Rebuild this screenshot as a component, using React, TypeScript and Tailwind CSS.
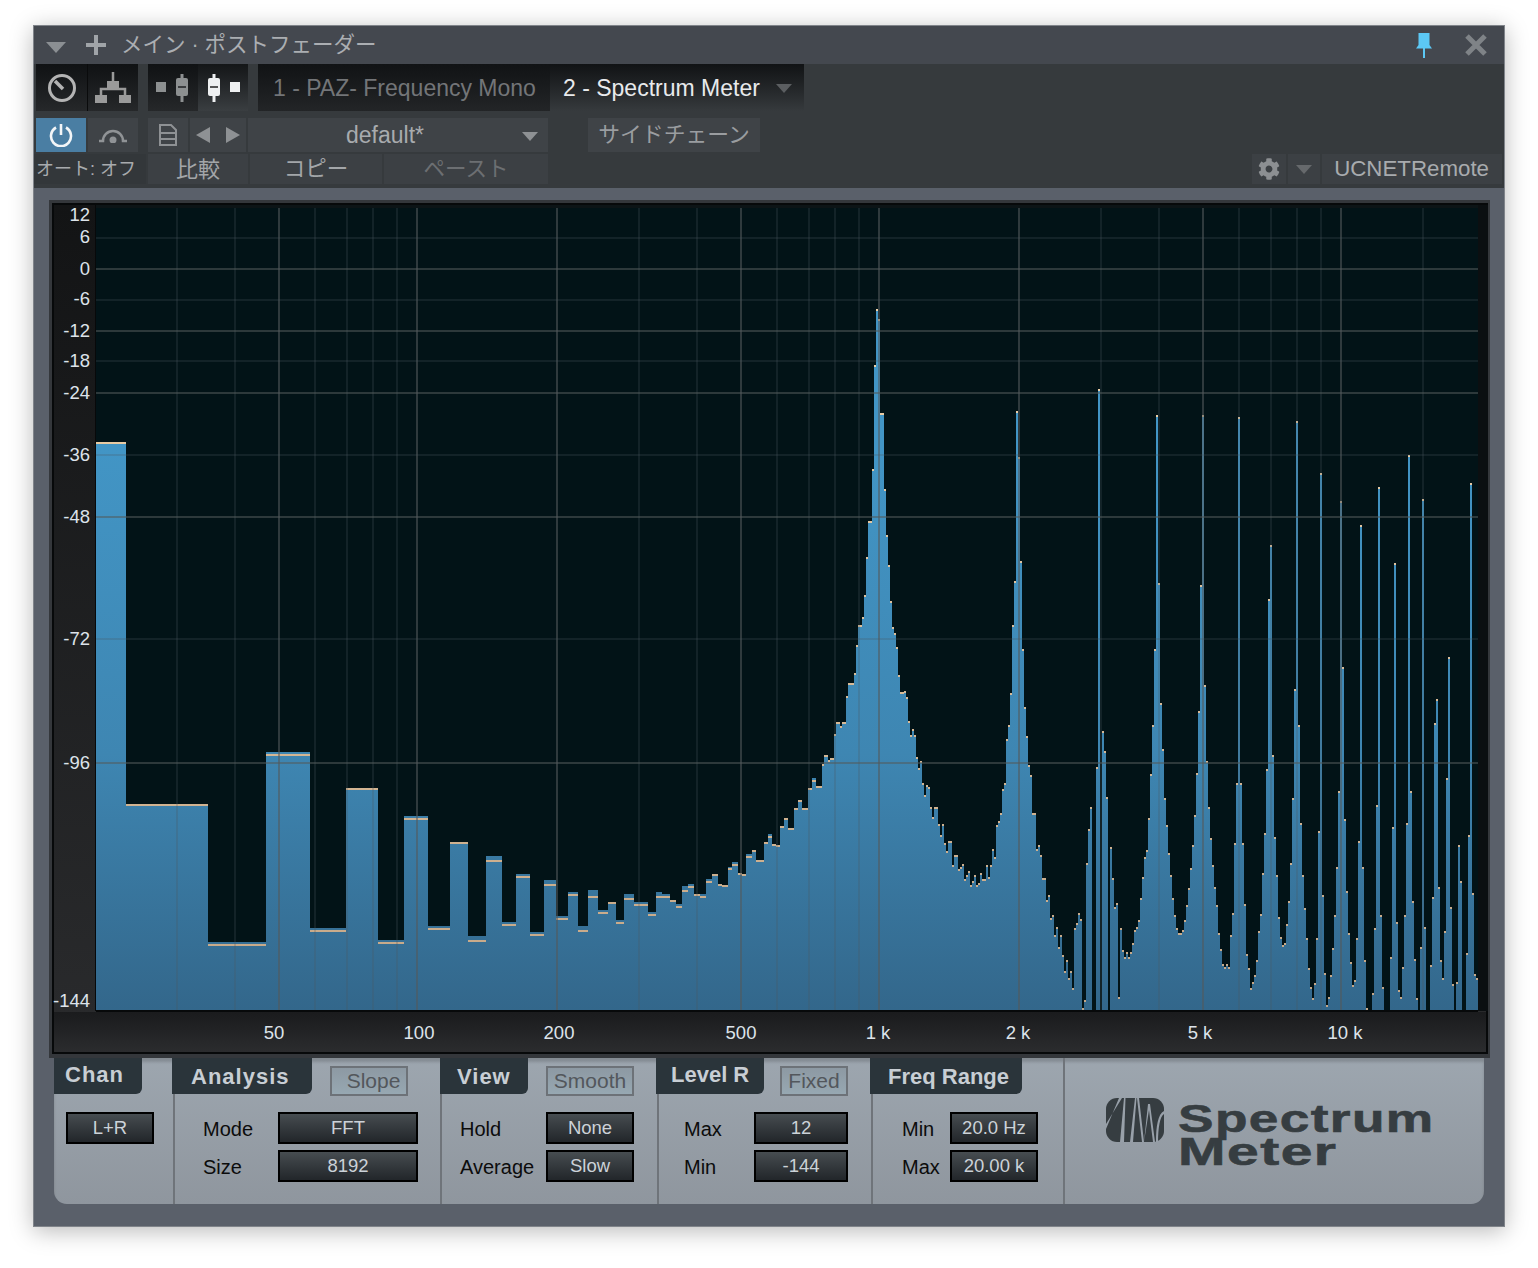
import React from 'react';
import { FaCog } from 'react-icons/fa';

const sans = 'font-["Liberation_Sans","Noto_Sans_CJK_JP",sans-serif]';

// x start, bar top, peak-hold marker (defaults to top). a block ends where the next one starts
const blocks: number[][] = [
  [96, 442], [126, 804], [208, 942, 944], [266, 752, 754], [310, 928, 930], [346, 788], [378, 940, 942],
  [404, 816, 818], [428, 926, 928], [450, 842], [468, 936, 940], [486, 856, 860], [502, 922, 924],
  [516, 874, 876], [530, 932, 934], [544, 880, 884], [556, 916, 918], [568, 892, 894], [578, 926, 930],
  [588, 890, 896], [598, 910, 912], [608, 902], [616, 920, 922], [624, 894, 898], [634, 902, 904],
  [648, 912, 914], [656, 892, 896], [662, 894, 896], [670, 900], [676, 904, 906], [682, 886, 890],
  [688, 884, 886], [694, 894], [700, 894, 896], [706, 879, 881], [712, 874], [718, 884], [722, 885],
  [728, 867, 868], [732, 862, 864], [738, 873], [742, 874], [746, 854, 856], [752, 850], [756, 860],
  [764, 842], [768, 834, 836], [772, 844], [776, 845], [780, 826], [784, 818], [788, 828], [794, 808],
  [798, 800], [802, 808], [808, 788], [812, 778, 780], [816, 786], [822, 764], [824, 755], [828, 760],
  [830, 758], [834, 734], [836, 722], [840, 726], [842, 722], [846, 696], [848, 683], [854, 673],
  [856, 645], [858, 625], [862, 617], [864, 595], [866, 557], [868, 521], [872, 469], [874, 365],
  [876, 309], [878, 319], [880, 413], [884, 489], [886, 535], [888, 565], [890, 601], [892, 627],
  [894, 633], [896, 647], [898, 675], [900, 692], [904, 691], [906, 697], [908, 721], [910, 735],
  [912, 729], [914, 735], [916, 757], [918, 768], [920, 761], [922, 783], [924, 795], [926, 785],
  [928, 787], [930, 807], [932, 817], [934, 807], [938, 824], [940, 835], [942, 824], [944, 843],
  [946, 851], [948, 841], [952, 865], [954, 855], [958, 869], [960, 867], [962, 864], [964, 879],
  [966, 875], [968, 871], [970, 885], [972, 881], [974, 875], [976, 885], [978, 883], [980, 873],
  [982, 879], [986, 865], [988, 877], [990, 865], [992, 849], [994, 857], [996, 825], [998, 821],
  [1000, 813], [1002, 789], [1004, 783], [1006, 739], [1008, 725], [1010, 693], [1012, 625], [1014, 581],
  [1016, 411], [1018, 457], [1020, 561], [1022, 649], [1024, 707], [1026, 736], [1028, 765], [1030, 775],
  [1032, 813], [1036, 849], [1038, 845], [1040, 855], [1042, 878], [1046, 900], [1048, 895], [1050, 918],
  [1052, 915], [1054, 935], [1056, 927], [1058, 947], [1060, 935], [1062, 955], [1064, 971], [1066, 960],
  [1068, 978], [1070, 971], [1072, 988], [1074, 928], [1076, 923], [1078, 913], [1080, 919], [1082, 1008],
  [1084, 1000], [1086, 863], [1088, 829], [1090, 807], [1092, 1010], [1096, 767], [1098, 389], [1100, 1010],
  [1102, 731], [1104, 751], [1106, 797], [1108, 1010], [1110, 847], [1112, 878], [1114, 907], [1116, 903],
  [1118, 997],
];

// from x=1120 the bars are plain 2px columns
const columns = [
  928, 950, 957, 952, 957, 952, 943, 930, 927, 920, 898, 877, 857, 850, 818, 774, 725, 649, 415, 583, 703, 749,
  798, 825, 853, 875, 898, 915, 928, 933, 933, 930, 920, 905, 888, 868, 845, 815, 773, 711, 585, 415, 685, 761,
  807, 838, 865, 887, 905, 933, 949, 964, 967, 964, 967, 935, 913, 843, 783, 417, 783, 843, 904, 954, 968, 988,
  982, 975, 960, 931, 914, 873, 833, 769, 599, 545, 755, 837, 875, 917, 937, 945, 943, 924, 901, 863, 798, 689,
  421, 725, 823, 875, 908, 938, 968, 987, 998, 983, 938, 831, 473, 895, 973, 1005, 997, 975, 948, 915, 867, 791,
  501, 667, 819, 891, 933, 962, 985, 980, 938, 841, 525, 867, 960, 1008, 1010, 1010, 993, 928, 805, 487, 915, 987,
  1010, 1010, 1010, 957, 827, 563, 922, 990, 997, 967, 915, 823, 455, 791, 901, 959, 998, 1010, 947, 499, 927, 1010,
  1010, 965, 897, 723, 699, 887, 960, 978, 931, 778, 657, 907, 984, 1010, 982, 845, 881, 1010, 1010, 953, 835, 483,
  893, 974, 978,
];

const bars = [
  ...blocks.map((b, i) => ({ x0: b[0], x1: i < blocks.length - 1 ? blocks[i + 1][0] : 1120, top: b[1], mark: b[2] ?? b[1] })),
  ...columns.map((top, i) => ({ x0: 1120 + i * 2, x1: 1122 + i * 2, top, mark: top })),
];

const barPath = bars.map((b) => `M${b.x0} 1010V${b.top}H${b.x1}V1010Z`).join('');

const dimV = [177, 235, 315, 347, 373, 397, 639, 697, 777, 809, 835, 859, 1101, 1159, 1239, 1271, 1297, 1321, 1423];
const brightV = [279, 417, 557, 741, 879, 1019, 1203, 1341];
const dimH = [238, 300, 361, 455, 639];
const brightH = [269, 331, 393, 517, 763];

const yLabels: [string, number][] = [
  ['12', 214], ['6', 236], ['0', 268], ['-6', 298], ['-12', 330], ['-18', 360], ['-24', 392],
  ['-36', 454], ['-48', 516], ['-72', 638], ['-96', 762], ['-144', 1000],
];
const xLabels: [string, number][] = [
  ['50', 274], ['100', 419], ['200', 559], ['500', 741], ['1 k', 878], ['2 k', 1018], ['5 k', 1200], ['10 k', 1345],
];

function Spectrum() {
  return (
    <svg width={1441} height={858} viewBox="49 200 1441 858" className="block">
      <defs>
        <linearGradient id="bar" gradientUnits="userSpaceOnUse" x1="0" y1="208" x2="0" y2="1010">
          <stop offset="0.3" stopColor="#4295c5" />
          <stop offset="0.68" stopColor="#3e86b2" />
          <stop offset="1" stopColor="#33678b" />
        </linearGradient>
        <linearGradient id="peak" gradientUnits="userSpaceOnUse" x1="0" y1="208" x2="0" y2="1010">
          <stop offset="0" stopColor="#f7dab0" />
          <stop offset="1" stopColor="#c4a687" />
        </linearGradient>
        <linearGradient id="side" x1="0" y1="0" x2="0" y2="1">
          <stop offset="0" stopColor="#131415" />
          <stop offset="1" stopColor="#2a2b2d" />
        </linearGradient>
        <linearGradient id="strip" x1="0" y1="0" x2="0" y2="1">
          <stop offset="0" stopColor="#1a1b1d" />
          <stop offset="1" stopColor="#2b2c2e" />
        </linearGradient>
      </defs>
      <rect x="49" y="200" width="1441" height="858" fill="#34373b" />
      <rect x="52" y="203" width="1436" height="851" fill="#07090a" />
      <rect x="54" y="205" width="1432" height="847" fill="url(#side)" />
      <rect x="95" y="205" width="1391" height="3" fill="#0c1416" />
      <rect x="95" y="205" width="1" height="806" fill="#07090a" />
      <rect x="1478" y="205" width="10" height="806" fill="#0b0f11" />
      <rect x="96" y="208" width="1382" height="802" fill="#021317" />
      <rect x="54" y="1012" width="1432" height="40" fill="url(#strip)" />
      <rect x="96" y="1010" width="1382" height="2" fill="#07090a" />

      <path d={barPath} fill="url(#bar)" />
      {bars.filter((b) => b.top < 1010).map((b) => (
        <rect key={b.x0} x={b.x0} y={b.mark} width={b.x1 - b.x0} height={2} fill="url(#peak)" />
      ))}

      {dimV.map((x) => <rect key={x} x={x - 0.75} y={208} width={1.5} height={802} fill="#4a5a60" opacity={0.32} />)}
      {brightV.map((x) => <rect key={x} x={x - 0.75} y={208} width={1.5} height={802} fill="#545a5b" opacity={0.75} />)}
      {dimH.map((y) => <rect key={y} x={96} y={y - 0.75} width={1382} height={1.5} fill="#4a5a60" opacity={0.32} />)}
      {brightH.map((y) => <rect key={y} x={96} y={y - 0.75} width={1382} height={1.5} fill="#545a5b" opacity={0.72} />)}

      <g fontFamily="'Liberation Sans', sans-serif" fontSize="18.5" fill="#dde3ea">
        {yLabels.map(([t, y]) => (
          <text key={t} x={90} y={y} textAnchor="end" dominantBaseline="central">{t}</text>
        ))}
        {xLabels.map(([t, x]) => (
          <text key={t} x={x} y={1032} textAnchor="middle" dominantBaseline="central">{t}</text>
        ))}
      </g>
    </svg>
  );
}

function Triangle({ className }: { className: string }) {
  return (
    <svg width="20" height="11" viewBox="0 0 20 11" className={className}>
      <path d="M0 0H20L10 11Z" fill="currentColor" />
    </svg>
  );
}

function Fader({ lit, flip }: { lit?: boolean; flip?: boolean }) {
  const c = lit ? '#eef0f1' : '#8d9091';
  const square = <rect x={flip ? 24 : 0} y="8" width="10" height="10" fill={c} />;
  const capX = flip ? 8 : 26;
  return (
    <svg width="34" height="28" viewBox="0 0 34 28">
      {square}
      <rect x={capX - 1.5} y="0" width="3" height="28" fill={c} />
      <rect x={capX - 6} y="4" width="12" height="18" rx="2" fill={c} />
      <rect x={capX - 4} y="12" width="8" height="2" fill={lit ? '#555' : '#3a3c3e'} />
    </svg>
  );
}

function Toggle({ label, w, ml, pl = '' }: { label: string; w: string; ml: string; pl?: string }) {
  return (
    <div className={`${w} ${ml} ${pl} mt-[8px] h-[30px] border-2 border-[#6d7278] bg-linear-to-b from-[#8d99a3] to-[#97a8b2] flex items-center justify-center text-[21px] text-[#53575c]`}>
      {label}
    </div>
  );
}

function Tab({ label, w, ml, pb, pl, track }: { label: string; w: string; ml: string; pb: string; pl: string; track: string }) {
  return (
    <div className={`${w} ${ml} ${pb} ${pl} ${track} h-[36px] bg-[#2a343a] rounded-br-[6px] flex items-center font-bold text-[22px] text-[#c8ced4] whitespace-nowrap`}>
      {label}
    </div>
  );
}

function Value({ label, w }: { label: string; w: string }) {
  return (
    <div className={`${w} h-[32px] border-2 border-black bg-linear-to-b from-[#474d51] to-[#22262a] flex items-center justify-center pb-[1px] text-[18.5px] text-[#ccd2d8]`}>
      {label}
    </div>
  );
}

function Row({ label, labelW, value, valueW }: { label: string; labelW: string; value: string; valueW: string }) {
  return (
    <div className="flex items-center h-[32px]">
      <div className={`${labelW} text-[20px] text-[#0c0c0c] pt-[2px]`}>{label}</div>
      <Value label={value} w={valueW} />
    </div>
  );
}

const toolBtn = 'h-full bg-[#3f4347] flex items-center justify-center';
const autoBtn = 'h-full bg-[#3c4044] flex items-center justify-center';

export default function App() {
  return (
    <div className={`${sans} w-[1538px] h-[1268px] bg-white pt-[25px] pl-[33px]`}>
      <div className="w-[1472px] border border-[#80848a] shadow-[0_4px_22px_rgba(0,0,0,0.28)]">
        {/* title bar */}
        <div className="h-[38px] bg-[#44484f] flex items-center pl-[12px] pr-[17px] text-[#abaeb2]">
          <Triangle className="text-[#8b8f93] mt-[4px]" />
          <svg width="20" height="20" viewBox="0 0 20 20" className="ml-[20px] text-[#a0a4a8]">
            <path d="M8 0h4v8h8v4h-8v8H8v-8H0V8h8z" fill="currentColor" />
          </svg>
          <span className="ml-[15px] pt-[2px] text-[21.5px] leading-none">メイン · ポストフェーダー</span>
          <svg width="16" height="25" viewBox="0 0 16 25" className="ml-auto">
            <path d="M2.5 0H13.5V12L16 15.5H9V25H7V15.5H0L2.5 12Z" fill="#5cc8f5" />
          </svg>
          <svg width="22" height="22" viewBox="0 0 22 22" className="ml-[33px]">
            <path d="M2 2L20 20M20 2L2 20" stroke="#7f8387" strokeWidth="5" />
          </svg>
        </div>

        {/* toolbar */}
        <div className="h-[124px] bg-[#363a3d] flex flex-col">
          <div className="h-[48px] flex pl-[2px]">
            <div className="w-[51px] h-[47px] bg-linear-to-b from-[#101214] to-[#26282a] flex items-center justify-center">
              <svg width="30" height="30" viewBox="0 0 30 30" fill="none" stroke="#b4b4b4" strokeWidth="3">
                <circle cx="15" cy="15" r="12.5" />
                <path d="M8 8L16 16" strokeWidth="3.5" />
              </svg>
            </div>
            <div className="w-[51px] h-[47px] border-l border-[#0a0b0c] bg-linear-to-b from-[#101214] to-[#26282a] flex items-center justify-center">
              <svg width="38" height="32" viewBox="0 0 38 32">
                <path d="M19 0v13M7 24v-7h24v7" fill="none" stroke="#9a9a9a" strokeWidth="2.5" />
                <rect x="13" y="9" width="12" height="8" fill="#9a9a9a" />
                <rect x="1" y="23" width="12" height="8" fill="#9a9a9a" />
                <rect x="25" y="23" width="12" height="8" fill="#9a9a9a" />
              </svg>
            </div>
            <div className="ml-[10px] w-[50px] h-[47px] bg-linear-to-b from-[#101214] to-[#26282a] flex items-center justify-center">
              <Fader />
            </div>
            <div className="w-[50px] h-[47px] bg-linear-to-b from-[#141618] to-[#3a3e41] flex items-center justify-center">
              <Fader lit flip />
            </div>
            <div className="ml-[10px] w-[292px] h-[47px] pt-[2px] bg-linear-to-b from-[#111315] to-[#232527] flex items-center pl-[15px] text-[23px] text-[#737578]">
              1 - PAZ- Frequency Mono
            </div>
            <div className="w-[254px] h-[47px] pt-[2px] bg-linear-to-b from-[#111315] to-[#363a3d] flex items-center pl-[13px] text-[23px] text-[#e8eaec]">
              2 - Spectrum Meter
              <Triangle className="ml-[16px] w-[16px] text-[#5b5e61]" />
            </div>
          </div>

          <div className="h-[34px] mt-[6px] flex pl-[2px]">
            <div className="w-[50px] h-full bg-[#4a7ea3] flex items-center justify-center">
              <svg width="24" height="24" viewBox="0 0 24 24" fill="none" stroke="#f2f5f7" strokeWidth="2.6">
                <path d="M7 4.5A10 10 0 1 0 17 4.5" />
                <path d="M12 1V12" />
              </svg>
            </div>
            <div className={`w-[50px] ml-[2px] ${toolBtn}`}>
              <svg width="32" height="16" viewBox="0 0 32 16">
                <path d="M2 14h4a10 10 0 0 1 20 0h4" fill="none" stroke="#909396" strokeWidth="2.5" />
                <circle cx="16" cy="13" r="3.5" fill="#909396" />
              </svg>
            </div>
            <div className={`w-[40px] ml-[10px] ${toolBtn}`}>
              <svg width="18" height="22" viewBox="0 0 18 22" fill="none" stroke="#8e9194" strokeWidth="2">
                <path d="M1 1H12L17 6V21H1ZM1 9H17M1 15H17" />
              </svg>
            </div>
            <div className={`w-[56px] ml-[2px] gap-[16px] ${toolBtn}`}>
              <svg width="14" height="16" viewBox="0 0 14 16"><path d="M14 0V16L0 8Z" fill="#8e9194" /></svg>
              <svg width="14" height="16" viewBox="0 0 14 16"><path d="M0 0V16L14 8Z" fill="#8e9194" /></svg>
            </div>
            <div className={`w-[300px] ml-[2px] ${toolBtn} relative text-[23px] text-[#a8abae] pr-[26px]`}>
              default*
              <Triangle className="absolute right-[10px] top-[13px] w-[16px] text-[#8e9194]" />
            </div>
            <div className={`w-[172px] ml-[40px] ${toolBtn} text-[21.8px] text-[#9a9da0]`}>サイドチェーン</div>
          </div>

          <div className="h-[30px] mt-[2px] flex">
            <div className="w-[112px] h-full bg-[#33373a] flex items-center pl-[2px] text-[18px] text-[#a8abae] whitespace-nowrap">オート: オフ</div>
            <div className={`w-[100px] ml-[2px] text-[22px] text-[#a3a6a9] ${autoBtn}`}>比較</div>
            <div className={`w-[132px] ml-[2px] text-[21.5px] text-[#a3a6a9] ${autoBtn}`}>コピー</div>
            <div className={`w-[164px] ml-[2px] text-[21.5px] text-[#6c6f72] ${autoBtn}`}>ペースト</div>
            <div className={`w-[34px] ml-auto ${autoBtn}`}>
              <FaCog size={22} color="#8c8f92" />
            </div>
            <div className={`w-[32px] ml-[2px] ${autoBtn}`}>
              <Triangle className="w-[16px] text-[#66696c]" />
            </div>
            <div className="w-[180px] ml-[2px] mr-[2px] h-full bg-[#3c4044] flex items-center justify-end pr-[13px] text-[22.3px] text-[#a8abae]">UCNETRemote</div>
          </div>
        </div>

        {/* body */}
        <div className="bg-[#5a606a] pt-[12px] pb-[22px]">
          <div className="ml-[15px] w-[1441px]">
            <Spectrum />
          </div>
          <div className="ml-[20px] w-[1430px] h-[146px] bg-linear-to-b from-[#9da6af] to-[#8f969e] rounded-b-[13px] shadow-[inset_0_4px_3px_rgba(0,0,0,0.16)] flex">
            <section className="w-[119px]">
              <Tab label="Chan" w="w-[88px]" ml="ml-0" pb="pb-[3px]" pl="pl-[11px]" track="tracking-[1px]" />
              <div className="mt-[18px] ml-[12px]">
                <Value label="L+R" w="w-[88px]" />
              </div>
            </section>

            <section className="w-[267px] border-l-2 border-[#6f747a]">
              <div className="flex h-[36px]">
                <Tab label="Analysis" w="w-[140px]" ml="-ml-[3px]" pb="pb-0" pl="pl-[19px]" track="tracking-[1px]" />
                <Toggle label="Slope" w="w-[78px]" ml="ml-[18px]" pl="pl-[9px]" />
              </div>
              <div className="mt-[18px] ml-[28px] flex flex-col gap-[6px]">
                <Row label="Mode" labelW="w-[75px]" value="FFT" valueW="w-[140px]" />
                <Row label="Size" labelW="w-[75px]" value="8192" valueW="w-[140px]" />
              </div>
            </section>

            <section className="w-[217px] border-l-2 border-[#6f747a]">
              <div className="flex h-[36px]">
                <Tab label="View" w="w-[88px]" ml="-ml-[2px]" pb="pb-0" pl="pl-[17px]" track="tracking-[1px]" />
                <Toggle label="Smooth" w="w-[88px]" ml="ml-[18px]" />
              </div>
              <div className="mt-[18px] ml-[18px] flex flex-col gap-[6px]">
                <Row label="Hold" labelW="w-[86px]" value="None" valueW="w-[88px]" />
                <Row label="Average" labelW="w-[86px]" value="Slow" valueW="w-[88px]" />
              </div>
            </section>

            <section className="w-[214px] border-l-2 border-[#6f747a]">
              <div className="flex h-[36px]">
                <Tab label="Level R" w="w-[108px]" ml="-ml-[3px]" pb="pb-[3px]" pl="pl-[15px]" track="tracking-[0px]" />
                <Toggle label="Fixed" w="w-[68px]" ml="ml-[16px]" />
              </div>
              <div className="mt-[18px] ml-[25px] flex flex-col gap-[6px]">
                <Row label="Max" labelW="w-[70px]" value="12" valueW="w-[94px]" />
                <Row label="Min" labelW="w-[70px]" value="-144" valueW="w-[94px]" />
              </div>
            </section>

            <section className="w-[192px] border-l-2 border-[#6f747a]">
              <Tab label="Freq Range" w="w-[152px]" ml="-ml-[3px]" pb="pb-0" pl="pl-[18px]" track="tracking-[0px]" />
              <div className="mt-[18px] ml-[29px] flex flex-col gap-[6px]">
                <Row label="Min" labelW="w-[48px]" value="20.0 Hz" valueW="w-[88px]" />
                <Row label="Max" labelW="w-[48px]" value="20.00 k" valueW="w-[88px]" />
              </div>
            </section>

            <section className="flex-1 border-l-2 border-[#6f747a] pl-[41px] pt-[40px] flex text-[#363d41]">
              <svg width="58" height="44" viewBox="0 0 58 44">
                <rect width="58" height="44" rx="11" fill="#363d41" />
                <path d="M0 31L13 0H16L0 26ZM14 44L18 0H19.5L18 44ZM24 44L29 0H30.5L27 44ZM31 0L36 44H38L33 0ZM38 44L43 12L47 44H49L44 6H42ZM50 44C50 28 52 16 58 13V16C54 18 52 30 52 44Z" fill="#98a0a9" />
              </svg>
              <div className="ml-[14px] mt-[5px] font-bold text-[38px] leading-[33px] tracking-[1px]" style={{ WebkitTextStroke: '0.6px #363d41' }}>
                <div className="origin-left scale-x-[1.4]">Spectrum</div>
                <div className="origin-left scale-x-[1.5]">Meter</div>
              </div>
            </section>
          </div>
        </div>
      </div>
    </div>
  );
}
